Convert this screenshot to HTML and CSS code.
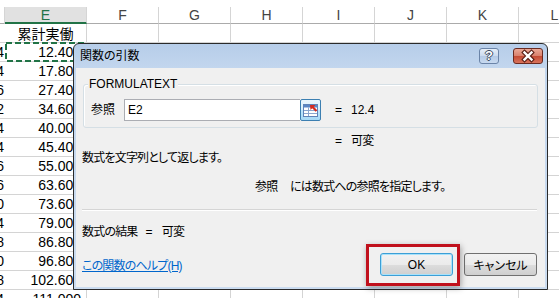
FILE: index.html
```html
<!DOCTYPE html>
<html>
<head>
<meta charset="utf-8">
<link rel="stylesheet" href="styles.css">
</head>
<body>
<div class="sheet">
  <div class="hrow">
    <div class="c d"></div><div class="c e sel">E</div><div class="c w">F</div><div class="c w">G</div><div class="c w">H</div><div class="c w">I</div><div class="c w">J</div><div class="c w">K</div><div class="c w">L</div>
  </div>
  <div class="row"><div class="c d"></div><div class="c e title-cell">累計実働</div><div class="c w"></div><div class="c w"></div><div class="c w"></div><div class="c w"></div><div class="c w"></div><div class="c w"></div><div class="c w"></div></div>
  <div class="row"><div class="c d num">5.4</div><div class="c e num cur"><svg class="marquee" width="82" height="20" viewBox="0 0 82 20"><rect x="1" y="1" width="80" height="18" fill="none" stroke="#217346" stroke-width="2" stroke-dasharray="6 3"/></svg>12.400</div><div class="c w"></div><div class="c w"></div><div class="c w"></div><div class="c w"></div><div class="c w"></div><div class="c w"></div><div class="c w"></div></div>
  <div class="row"><div class="c d num">5.4</div><div class="c e num">17.800</div><div class="c w"></div><div class="c w"></div><div class="c w"></div><div class="c w"></div><div class="c w"></div><div class="c w"></div><div class="c w"></div></div>
  <div class="row"><div class="c d num">9.6</div><div class="c e num">27.400</div><div class="c w"></div><div class="c w"></div><div class="c w"></div><div class="c w"></div><div class="c w"></div><div class="c w"></div><div class="c w"></div></div>
  <div class="row"><div class="c d num">7.2</div><div class="c e num">34.600</div><div class="c w"></div><div class="c w"></div><div class="c w"></div><div class="c w"></div><div class="c w"></div><div class="c w"></div><div class="c w"></div></div>
  <div class="row"><div class="c d num">5.4</div><div class="c e num">40.000</div><div class="c w"></div><div class="c w"></div><div class="c w"></div><div class="c w"></div><div class="c w"></div><div class="c w"></div><div class="c w"></div></div>
  <div class="row"><div class="c d num">5.4</div><div class="c e num">45.400</div><div class="c w"></div><div class="c w"></div><div class="c w"></div><div class="c w"></div><div class="c w"></div><div class="c w"></div><div class="c w"></div></div>
  <div class="row"><div class="c d num">9.6</div><div class="c e num">55.000</div><div class="c w"></div><div class="c w"></div><div class="c w"></div><div class="c w"></div><div class="c w"></div><div class="c w"></div><div class="c w"></div></div>
  <div class="row"><div class="c d num">8.6</div><div class="c e num">63.600</div><div class="c w"></div><div class="c w"></div><div class="c w"></div><div class="c w"></div><div class="c w"></div><div class="c w"></div><div class="c w"></div></div>
  <div class="row"><div class="c d num">10</div><div class="c e num">73.600</div><div class="c w"></div><div class="c w"></div><div class="c w"></div><div class="c w"></div><div class="c w"></div><div class="c w"></div><div class="c w"></div></div>
  <div class="row"><div class="c d num">5.4</div><div class="c e num">79.000</div><div class="c w"></div><div class="c w"></div><div class="c w"></div><div class="c w"></div><div class="c w"></div><div class="c w"></div><div class="c w"></div></div>
  <div class="row"><div class="c d num">7.8</div><div class="c e num">86.800</div><div class="c w"></div><div class="c w"></div><div class="c w"></div><div class="c w"></div><div class="c w"></div><div class="c w"></div><div class="c w"></div></div>
  <div class="row"><div class="c d num">10</div><div class="c e num">96.800</div><div class="c w"></div><div class="c w"></div><div class="c w"></div><div class="c w"></div><div class="c w"></div><div class="c w"></div><div class="c w"></div></div>
  <div class="row"><div class="c d num">5.8</div><div class="c e num">102.600</div><div class="c w"></div><div class="c w"></div><div class="c w"></div><div class="c w"></div><div class="c w"></div><div class="c w"></div><div class="c w"></div></div>
  <div class="row"><div class="c d num">8.4</div><div class="c e num">111.000</div><div class="c w"></div><div class="c w"></div><div class="c w"></div><div class="c w"></div><div class="c w"></div><div class="c w"></div><div class="c w"></div></div>
</div>

<div class="dialog">
  <div class="titlebar">
    <span class="title">関数の引数</span>
    <div class="tbtns">
      <span class="tb help">?</span>
      <span class="tb close"><svg width="28" height="14" viewBox="0 0 28 14"><path d="M10.5 3.5 L17.5 10.5 M17.5 3.5 L10.5 10.5" stroke="#5a2018" stroke-width="4.6" stroke-linecap="square"/><path d="M10.5 3.5 L17.5 10.5 M17.5 3.5 L10.5 10.5" stroke="#ffffff" stroke-width="2.4" stroke-linecap="square"/></svg></span>
    </div>
  </div>
  <div class="dbody">
    <div class="group">
      <div class="legend"><span>FORMULATEXT</span></div>
      <div class="argrow">
        <span class="arglabel">参照</span>
        <div class="input">E2</div>
        <span class="refbtn"><svg width="19" height="20" viewBox="0 0 19 20">
          <rect x="2.5" y="4.5" width="14" height="12" fill="#ffffff" stroke="#5f83b8"/>
          <rect x="3" y="5" width="13" height="2.5" fill="#5a86c5"/>
          <path d="M3 10.5 H16 M3 13.5 H16 M7.5 7.5 V16" stroke="#8aa6cf" stroke-width="1"/>
          <path d="M9 5 L14.5 5 L12.8 6.7 L16.3 10.2 L14.7 11.8 L11.2 8.3 L9.5 10 Z" fill="#d42a1e"/>
        </svg></span>
        <span class="eq">=</span><span class="val">12.4</span>
      </div>
    </div>
    <div class="resrow"><span class="eq">=</span><span class="val jp">可変</span></div>
    <div class="desc jp">数式を文字列として返します。</div>
    <div class="pdesc jp"><span class="pname">参照</span><span>には数式への参照を指定します。</span></div>
    <div class="sep"></div>
    <div class="result jp"><span>数式の結果</span><span class="req">=</span><span>可変</span></div>
    <div class="footer">
      <a class="helplink jp">この関数のヘルプ(H)</a>
      <div class="btns"><button class="btn ok">OK</button><button class="btn">キャンセル</button></div>
    </div>
  </div>
  <div class="highlight"></div>
</div>
</body>
</html>
```

FILE: styles.css
```css
* { box-sizing: border-box; }
html, body { margin: 0; padding: 0; }
body {
  width: 559px;
  height: 298px;
  overflow: hidden;
  position: relative;
  background: #ffffff;
  font-family: "Liberation Sans", Arial, sans-serif;
}

/* spreadsheet */
.sheet { padding-top: 7px; }
.hrow, .row { display: flex; }
.c {
  flex: none;
  white-space: nowrap;
  overflow: hidden;
}
.d { width: 5px; }
.e { width: 82px; }
.w { width: 72px; }

.hrow .c {
  height: 17px;
  border-right: 1px solid #d5d5d5;
  border-bottom: 1px solid #ababab;
  font-size: 14px;
  line-height: 16px;
  color: #444444;
  text-align: center;
}
.hrow .c.sel {
  background: #e1e1e1;
  color: #217346;
  border-bottom: 2px solid #217346;
}

.row .c {
  height: 19px;
  border-right: 1px solid #d4d4d4;
  border-bottom: 1px solid #d4d4d4;
  font-size: 14px;
  color: #000000;
}
.row .c.d { border-right: none; }
.num {
  display: flex;
  justify-content: flex-end;
  align-items: center;
  padding-right: 5px;
}
.row .c.d.num { padding-right: 1px; }
.title-cell {
  font-family: "Noto Sans CJK JP", sans-serif;
  font-size: 15px;
  line-height: 18px;
  text-align: center;
}
.cur { position: relative; overflow: visible; }
.marquee { position: absolute; left: 0; top: -1px; }

/* dialog */
.dialog {
  position: absolute;
  left: 73px;
  top: 43px;
  width: 475px;
  height: 247px;
  border: 1px solid #2a2a2a;
  border-radius: 6px 6px 0 0;
  background: linear-gradient(#b6cde9, #c2d6ee 24px, #cbdcf0);
  padding: 0 2px 2px 2px;
  display: flex;
  flex-direction: column;
  font-family: "Liberation Sans", "Noto Sans CJK JP", sans-serif;
  font-size: 12px;
  font-feature-settings: "palt" 1;
  color: #000000;
}
.jp { letter-spacing: -0.8px; }
.titlebar {
  height: 24px;
  flex: none;
  display: flex;
  align-items: center;
  justify-content: space-between;
  padding: 0 2px 0 4px;
}
.title { font-size: 12px; color: #000; line-height: 14px; }
.tbtns { display: flex; align-items: center; }
.tb {
  height: 16px;
  border: 1px solid #6b84a8;
  border-radius: 3px;
  display: flex;
  align-items: center;
  justify-content: center;
}
.help {
  width: 20px;
  margin-right: 14px;
  background: linear-gradient(#e6eef8, #cbdaee 50%, #b5cae6 51%, #c8daf0);
  color: #ffffff;
  font-weight: bold;
  font-size: 13px;
  line-height: 14px;
  text-shadow: 1px 0 0 #3c4a60, -1px 0 0 #3c4a60, 0 1px 0 #3c4a60, 0 -1px 0 #3c4a60;
}
.close {
  width: 30px;
  border-color: #6a2a20;
  background: linear-gradient(#eaa896, #d9806c 50%, #c44a33 51%, #d8735c);
}

.dbody {
  flex: 1;
  background: #f0f0f0;
  display: flex;
  flex-direction: column;
}
.group {
  margin: 16px 0 0 7px;
  width: 455px;
  border: 1px solid #d5dfe5;
  border-radius: 3px;
  box-shadow: inset 1px 1px 0 #ffffff;
  padding: 0 0 6px 7px;
}
.legend {
  margin: -8px 0 0 -3px;
  height: 14px;
  line-height: 14px;
}
.legend span { background: #f0f0f0; padding: 0 1px; }
.argrow {
  margin-top: 8px;
  display: flex;
  align-items: center;
  height: 22px;
}
.arglabel { width: 33px; line-height: 14px; }
.input {
  width: 176px;
  height: 22px;
  background: #ffffff;
  border: 1px solid #abadb3;
  border-right: none;
  padding-left: 3px;
  line-height: 20px;
}
.refbtn {
  width: 21px;
  height: 22px;
  border: 1px solid #3c7fb1;
  border-radius: 2px;
  background: linear-gradient(#eaf6fd, #d9f0fc 50%, #bee6fd 51%, #a7d9f5);
  display: flex;
  align-items: center;
  justify-content: center;
}
.eq { margin-left: 14px; width: 7px; line-height: 14px; }
.val { margin-left: 9px; line-height: 14px; }

.resrow {
  margin-top: 6px;
  padding-left: 245px;
  display: flex;
  line-height: 14px;
}
.desc { margin-top: 3px; padding-left: 6px; line-height: 14px; }
.pdesc {
  margin-top: 15px;
  padding-left: 179px;
  display: flex;
  line-height: 14px;
}
.pname { width: 35px; }
.sep {
  margin: 15px 0 0 6px;
  width: 455px;
  height: 2px;
  border-top: 1px solid #d5d5d5;
  border-bottom: 1px solid #ffffff;
}
.result {
  margin-top: 14px;
  padding-left: 6px;
  display: flex;
  line-height: 14px;
}
.req { margin: 0 10px 0 8px; }
.footer {
  margin-top: 14px;
  padding: 0 8px 0 6px;
  display: flex;
  align-items: center;
  justify-content: space-between;
}
.helplink {
  color: #0066cc;
  text-decoration: underline;
  line-height: 14px;
  margin-top: 3px;
}
.btns { display: flex; gap: 11px; }
.btn {
  width: 73px;
  height: 23px;
  border: 1px solid #707070;
  border-radius: 3px;
  background: linear-gradient(#f2f2f2, #ebebeb 50%, #dddddd 51%, #cfcfcf);
  font: inherit;
  color: #000;
  padding: 0;
}
.btn.ok {
  border-color: #3c9fd6;
  box-shadow: inset 0 0 0 1px #a8e2fb;
}
.highlight {
  position: absolute;
  left: 292px;
  top: 200px;
  width: 94px;
  height: 42px;
  border: 3px solid #c0101c;
  box-shadow: 1px 2px 6px rgba(0, 0, 0, 0.35);
}
```
